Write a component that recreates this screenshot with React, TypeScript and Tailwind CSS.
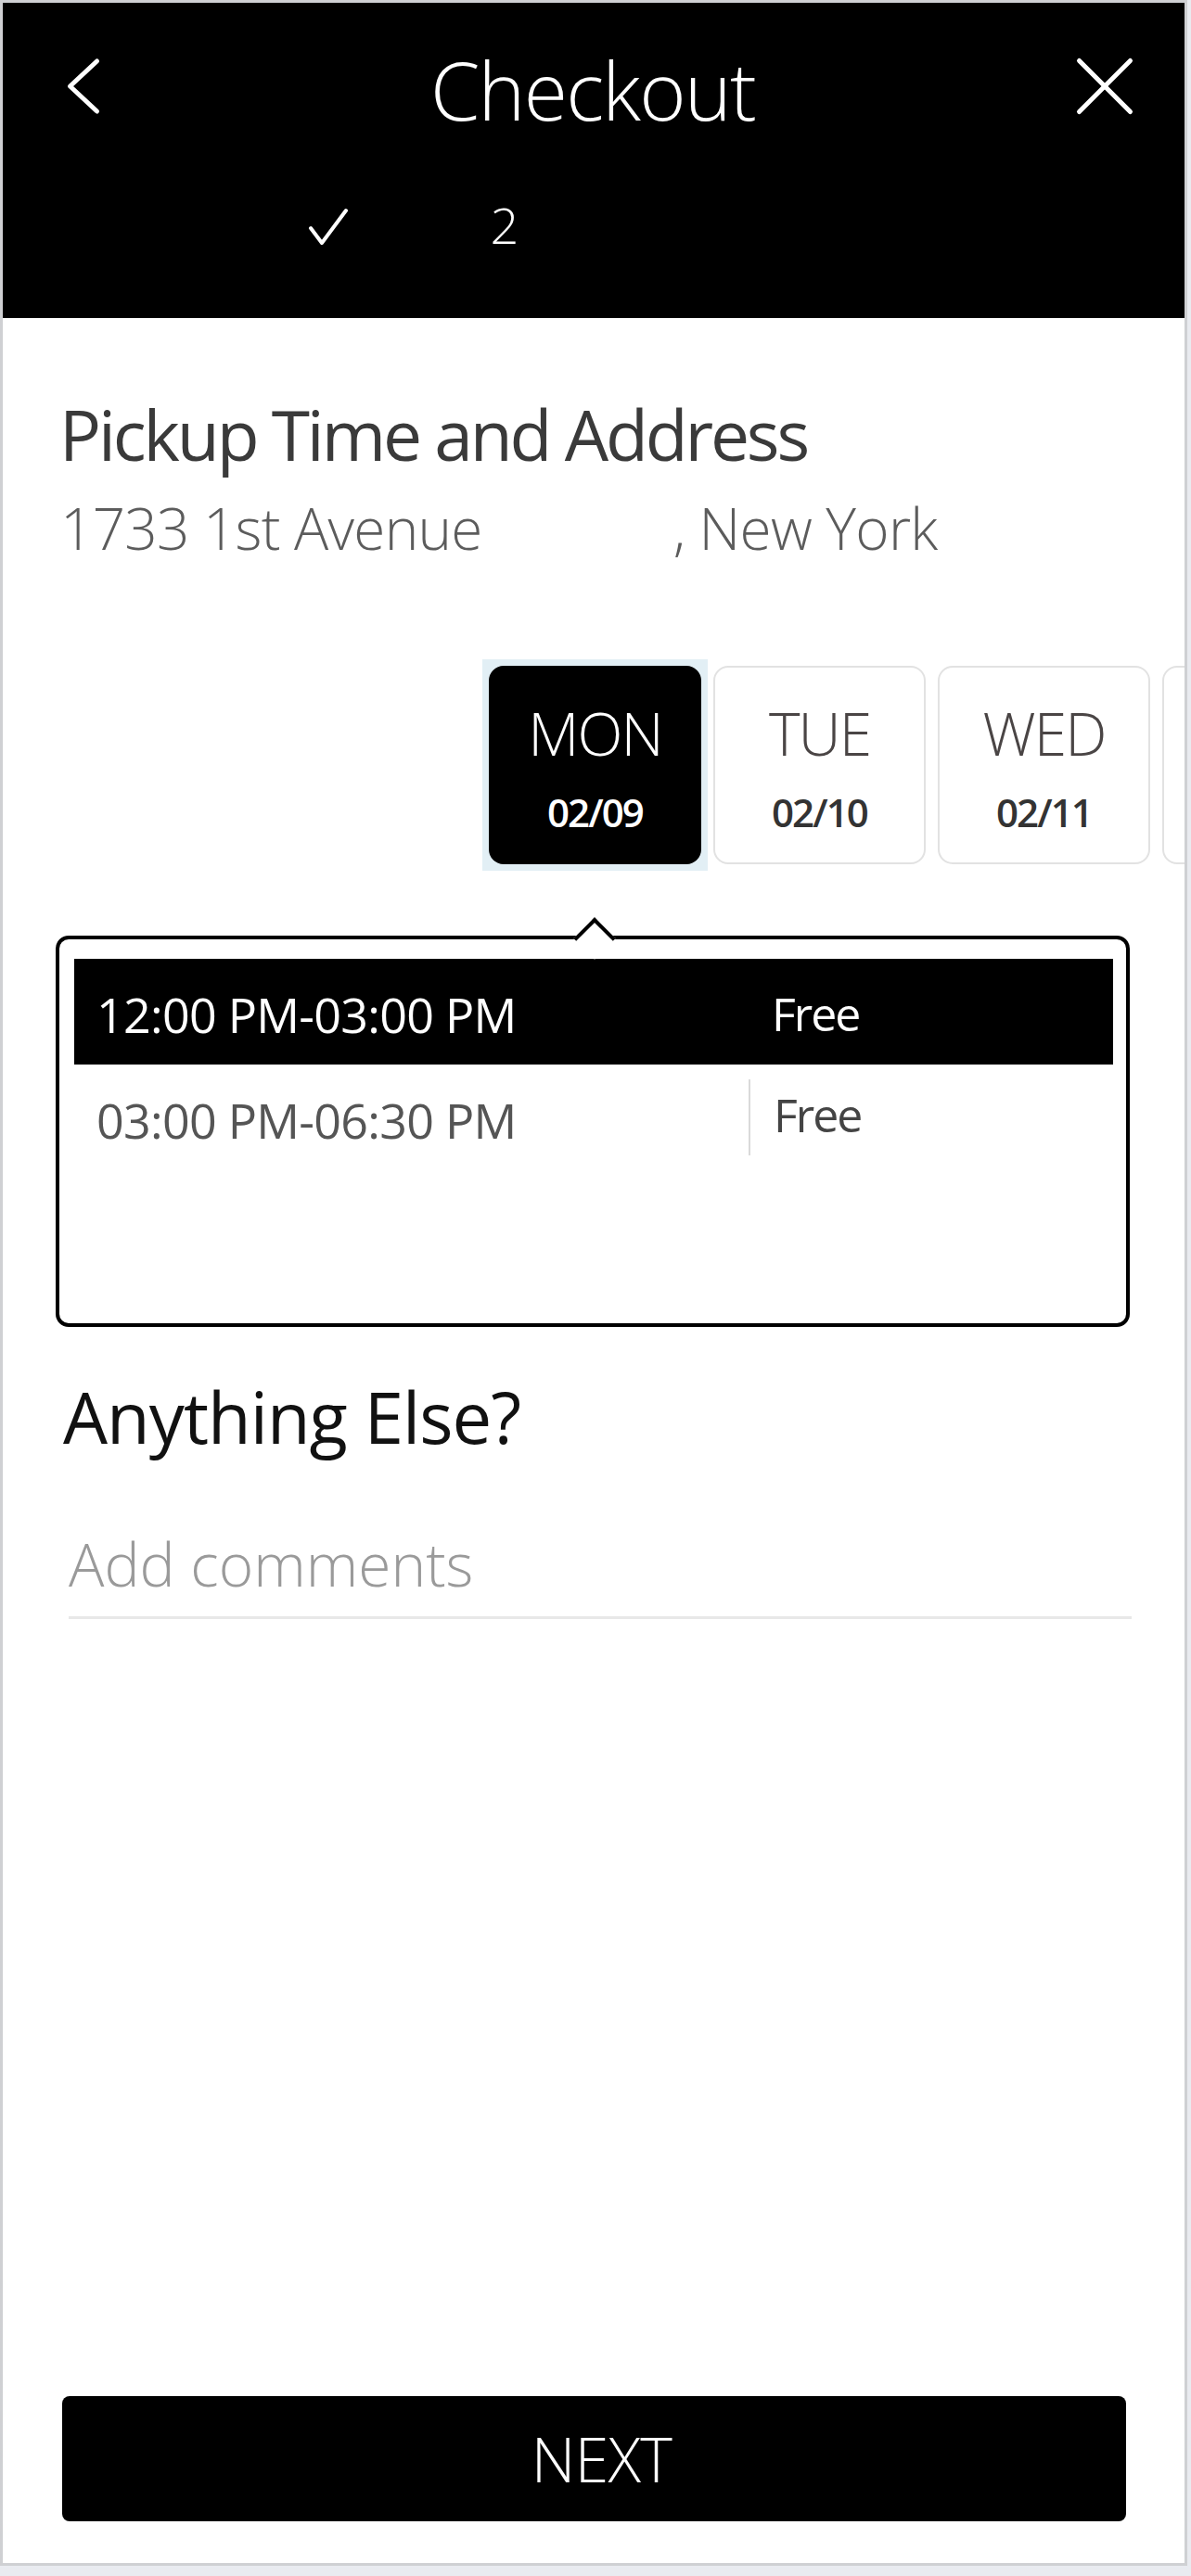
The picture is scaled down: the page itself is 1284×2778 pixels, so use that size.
import React from "react";

const days = [
  { day: "MON", date: "02/09", active: true },
  { day: "TUE", date: "02/10", active: false },
  { day: "WED", date: "02/11", active: false },
];

const slots = [
  { time: "12:00 PM-03:00 PM", price: "Free", active: true },
  { time: "03:00 PM-06:30 PM", price: "Free", active: false },
];

function DayCard({ day, date, active }: { day: string; date: string; active: boolean }) {
  return (
    <div className={active ? "shrink-0 -m-[7px] p-[7px] bg-[#e2eff5]" : "shrink-0"}>
      <div
        className={
          active
            ? "w-[229px] h-[214px] rounded-[16px] bg-black text-white flex flex-col items-center pt-[41px]"
            : "w-[229px] h-[214px] rounded-[16px] bg-white border-2 border-[#e2e2e2] text-[#4a4545] flex flex-col items-center pt-[39px]"
        }
      >
        <span className="text-[64px] leading-none font-light tracking-[-0.03em]">{day}</span>
        <span
          className={
            active
              ? "mt-[32px] text-[42px] leading-none font-semibold tracking-[-0.045em]"
              : "mt-[32px] text-[42px] leading-none font-semibold tracking-[-0.045em] text-[#333]"
          }
        >
          {date}
        </span>
      </div>
    </div>
  );
}

export default function App() {
  return (
    <div className="min-h-screen bg-[#e9ebf0] font-['Open_Sans',sans-serif]">
      <div className="w-[1280px] h-[2767px] border-[3px] border-[#cfd0d3] bg-white flex flex-col overflow-hidden">
        <header className="h-[340px] shrink-0 bg-black text-white flex flex-col">
          <div className="grid grid-cols-[1fr_auto_1fr] items-start pt-[51px] pl-[68px] pr-[54px]">
            <button className="justify-self-start mt-[5px]">
              <svg width="44" height="68" viewBox="0 0 44 68" fill="none" stroke="white" strokeWidth="5" strokeLinecap="round" strokeLinejoin="round">
                <polyline points="33.5,7 4.5,34 33.5,61" />
              </svg>
            </button>
            <h1 className="mr-[16px] text-[86px] leading-none font-light tracking-[-0.02em]">Checkout</h1>
            <button className="justify-self-end mt-[7px]">
              <svg width="64" height="64" viewBox="0 0 64 64" fill="none" stroke="white" strokeWidth="5" strokeLinecap="round">
                <line x1="4.5" y1="4.5" x2="59.5" y2="59.5" />
                <line x1="59.5" y1="4.5" x2="4.5" y2="59.5" />
              </svg>
            </button>
          </div>
          <div className="flex items-start pl-[256px] mt-[75px]">
            <div className="w-[190px] flex justify-center mt-[6px]">
              <svg width="48" height="46" viewBox="0 0 48 46" fill="none" stroke="white" strokeWidth="4" strokeLinecap="round" strokeLinejoin="round">
                <polyline points="5,25 17,41 43,6" />
              </svg>
            </div>
            <div className="w-[190px] text-center text-[54px] leading-none font-light">2</div>
          </div>
        </header>

        <main className="flex-1 flex flex-col">
          <h2 className="mt-[88px] ml-[61px] text-[75px] leading-none tracking-[-0.042em] text-[#3a3a3a]">
            Pickup Time and Address
          </h2>
          <p className="mt-[32px] ml-[62px] text-[62px] leading-none font-light tracking-[-0.012em] text-[#5c5c5c]">
            1733 1st Avenue<span className="inline-block w-[206px]" />, New York
          </p>

          <div className="mt-[111px] py-[7px] pl-[524px] flex gap-[13px] overflow-hidden">
            {days.map((d) => (
              <DayCard key={d.day} {...d} />
            ))}
            <div className="shrink-0 w-[229px] h-[214px] rounded-[16px] bg-white border-2 border-[#e2e2e2]" />
          </div>

          <div className="relative mt-[70px] ml-[57px] w-[1158px] h-[422px] shrink-0 border-[4px] border-black rounded-[14px] pt-[21px] pl-[16px] pr-[14px]">
            <div className="absolute left-[561px] -top-[17px] w-[32px] h-[32px] rotate-45 bg-white border-l-4 border-t-4 border-black" />
            {slots.map((s) => (
              <div key={s.time} className={s.active ? "flex h-[114px] bg-black text-white" : "flex h-[114px] text-[#555]"}>
                <div className="w-[727px] flex items-center pl-[24px] pt-[6px] text-[52px] leading-none tracking-[-0.014em]">
                  {s.time}
                </div>
                <div
                  className={
                    s.active
                      ? "flex items-center pl-[25px] pt-[4px] text-[50px] leading-none tracking-[-0.04em]"
                      : "my-[16px] border-l-2 border-[#dadada] flex items-center pl-[25px] pb-[6px] text-[50px] leading-none tracking-[-0.04em] text-[#444]"
                  }
                >
                  {s.price}
                </div>
              </div>
            ))}
          </div>

          <h3 className="mt-[59px] ml-[65px] text-[76px] leading-none tracking-[-0.0125em] text-[#111]">Anything Else?</h3>
          <div className="mt-[89px] ml-[71px] w-[1146px] pb-[24px] border-b-[3px] border-[#e8e8e8] text-[64px] leading-none font-light text-[#9a9a9a]">
            Add comments
          </div>

          <div className="flex-1" />
          <button className="ml-[64px] mb-[45px] w-[1147px] h-[135px] shrink-0 rounded-[8px] bg-black pl-[16px] text-white text-[66px] font-light tracking-[-0.01em]">
            NEXT
          </button>
        </main>
      </div>
    </div>
  );
}
